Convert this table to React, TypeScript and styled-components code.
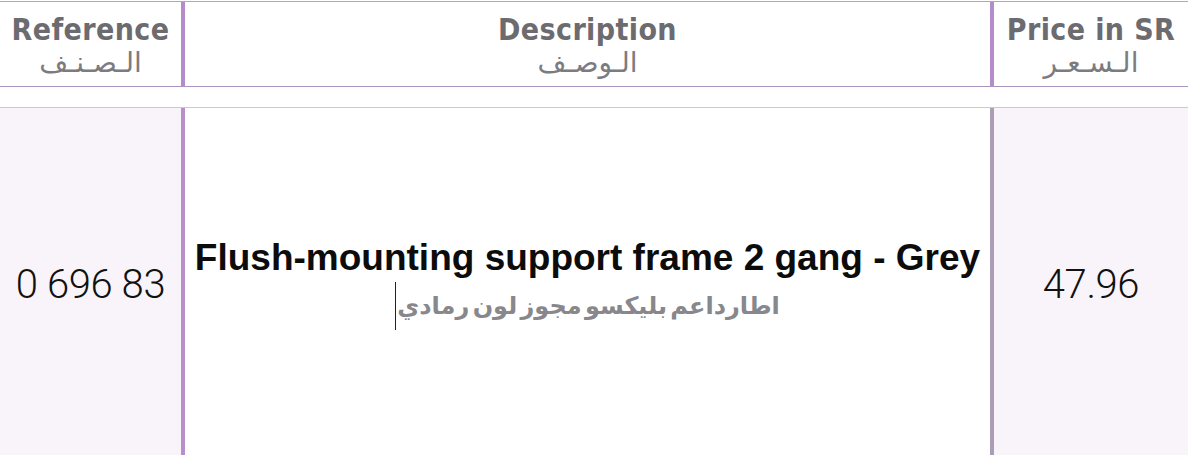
import { FC } from "react";
import styled, { createGlobalStyle } from "styled-components";

const GlobalStyle = createGlobalStyle`
  html, body {
    margin: 0;
    padding: 0;
    background: #fff;
  }
  body {
    width: 1191px;
    height: 455px;
    overflow: hidden;
  }
`;

const Table = styled.div`
  width: 1188px;
  display: flex;
  flex-direction: column;
`;

const HeaderRow = styled.div`
  display: grid;
  grid-template-columns: 181px 809px 198px;
  height: 84px;
  border-top: 1px solid #b9a0c6;
  border-bottom: 1px solid #ad96bd;
  margin-top: 1px;
`;

const Spacer = styled.div`
  height: 20px;
`;

const BodyRow = styled.div`
  display: grid;
  grid-template-columns: 181px 809px 198px;
  height: 348px;
  border-top: 1px solid #cfc8d3;
`;

const HeadCell = styled.div<{ $bar?: boolean }>`
  display: flex;
  flex-direction: column;
  align-items: center;
  padding-top: 10px;
  border-left: ${(p) => (p.$bar ? "4px solid #b68bca" : "none")};
`;

const HeadTitle = styled.div`
  font-family: "DejaVu Sans Condensed", "DejaVu Sans", sans-serif;
  font-weight: bold;
  font-size: 30px;
  line-height: 36px;
  color: #6c6b70;
  letter-spacing: 0.4px;
`;

const HeadArabic = styled.div`
  font-family: "DejaVu Sans", sans-serif;
  font-size: 28px;
  line-height: 30px;
  color: #7c7b80;
  direction: rtl;
`;

const BodyCell = styled.div<{ $tint?: boolean; $bar?: string }>`
  display: flex;
  flex-direction: column;
  align-items: center;
  justify-content: center;
  background: ${(p) => (p.$tint ? "#f8f4fa" : "#fff")};
  border-left: ${(p) => (p.$bar ? `4px solid ${p.$bar}` : "none")};
`;

const Figure = styled.div`
  font-family: Roboto, "DejaVu Sans", sans-serif;
  font-weight: 300;
  font-size: 40px;
  color: #111;
  margin-top: 4px;
  letter-spacing: -0.4px;
`;

const DescTitle = styled.div`
  font-family: "Liberation Sans", Arial, sans-serif;
  font-weight: bold;
  font-size: 37px;
  line-height: 40px;
  color: #0c0c0c;
  margin-top: 4px;
`;

const DescArabic = styled.div`
  font-family: "DejaVu Sans", sans-serif;
  font-weight: bold;
  font-size: 24px;
  line-height: 48px;
  color: #88878c;
  direction: rtl;
  word-spacing: -5px;
  border-left: 1px solid #222;
  padding-left: 1px;
  margin-top: 4px;
`;

const App: FC = () => (
  <>
    <GlobalStyle />
    <Table>
      <HeaderRow>
        <HeadCell>
          <HeadTitle>Reference</HeadTitle>
          <HeadArabic>الـصـنـف</HeadArabic>
        </HeadCell>
        <HeadCell $bar>
          <HeadTitle>Description</HeadTitle>
          <HeadArabic>الـوصـف</HeadArabic>
        </HeadCell>
        <HeadCell $bar>
          <HeadTitle>Price in SR</HeadTitle>
          <HeadArabic>الـسـعـر</HeadArabic>
        </HeadCell>
      </HeaderRow>
      <Spacer />
      <BodyRow>
        <BodyCell $tint>
          <Figure>0 696 83</Figure>
        </BodyCell>
        <BodyCell $bar="#b88ecb">
          <DescTitle>Flush-mounting support frame 2 gang - Grey</DescTitle>
          <DescArabic>اطارداعم بليكسو مجوز لون رمادي</DescArabic>
        </BodyCell>
        <BodyCell $tint $bar="#ab9db3">
          <Figure>47.96</Figure>
        </BodyCell>
      </BodyRow>
    </Table>
  </>
);

export default App;
